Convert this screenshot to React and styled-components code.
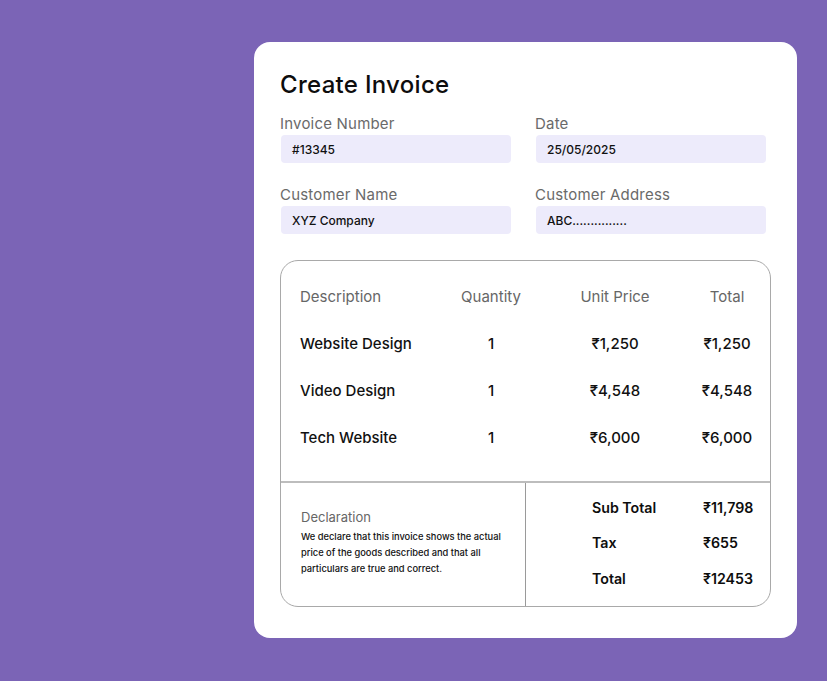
import React from "react";
import styled, { createGlobalStyle } from "styled-components";

const GlobalStyle = createGlobalStyle`
  html, body {
    margin: 0;
    padding: 0;
    background: #7b64b6;
  }
  body {
    font-family: Inter, "Noto Sans", "DejaVu Sans", sans-serif;
    color: #111;
  }
`;

const Page = styled.div`
  width: 827px;
  height: 681px;
  box-sizing: border-box;
  padding: 42px 0 0 254px;
  background: #7b64b6;
  overflow: hidden;
`;

const Card = styled.div`
  width: 543px;
  height: 596px;
  box-sizing: border-box;
  background: #fff;
  border-radius: 16px;
  padding: 27px 26px 31px 26px;
  display: flex;
  flex-direction: column;
`;

const Title = styled.h1`
  margin: 0;
  font-size: 24px;
  line-height: 32px;
  font-weight: 500;
  letter-spacing: 0.3px;
  color: #0d0d0d;
`;

const FormGrid = styled.div`
  display: grid;
  grid-template-columns: 231px 231px;
  column-gap: 24px;
  row-gap: 22px;
  margin-top: 13px;
`;

const Field = styled.div`
  display: flex;
  flex-direction: column;
  gap: 1px;
`;

const Label = styled.label`
  font-size: 15px;
  line-height: 20px;
  letter-spacing: 0.2px;
  color: #6a6a6a;
`;

const Input = styled.div`
  height: 28px;
  margin-left: 1px;
  box-sizing: border-box;
  background: #edebfb;
  border-radius: 4px;
  padding: 0 11px;
  display: flex;
  align-items: center;
  font-size: 12px;
  font-weight: 500;
  color: #111;
`;

const Table = styled.div`
  margin-top: 26px;
  border: 1px solid #a9a9a9;
  border-radius: 18px;
  flex: 1;
  display: flex;
  flex-direction: column;
  overflow: hidden;
`;

const Items = styled.div`
  padding: 12px 6px 20px 19px;
  display: grid;
  grid-template-columns: 141px 100px 148px 76px;
  grid-auto-rows: 47px;
  align-items: center;
`;

const Cell = styled.div`
  font-size: 15px;
  font-weight: ${p => (p.head ? 400 : 500)};
  color: ${p => (p.head ? "#666" : "#111")};
  text-align: ${p => (p.center ? "center" : "left")};
  white-space: nowrap;
`;

const Footer = styled.div`
  flex: 1;
  border-top: 2px solid #bdbdbd;
  display: grid;
  grid-template-columns: 245px 1fr;
`;

const Declaration = styled.div`
  border-right: 1px solid #9a9a9a;
  padding: 0 14px 4px 20px;
  display: flex;
  flex-direction: column;
  justify-content: center;
`;

const DeclTitle = styled.div`
  font-size: 13px;
  line-height: 16px;
  color: #666;
  margin-bottom: 4px;
`;

const DeclText = styled.p`
  margin: 0;
  max-width: 212px;
  font-size: 9.3px;
  line-height: 16px;
  font-weight: 500;
  color: #111;
`;

const Summary = styled.div`
  padding: 0 0 4px 66px;
  display: grid;
  grid-template-columns: 111px 1fr;
  grid-auto-rows: 35.5px;
  align-content: center;
  align-items: center;
`;

const SumCell = styled.div`
  font-size: 14.2px;
  font-weight: 600;
  color: #0d0d0d;
`;

const items = [
  { name: "Website Design", qty: 1, price: "₹1,250", total: "₹1,250" },
  { name: "Video Design", qty: 1, price: "₹4,548", total: "₹4,548" },
  { name: "Tech Website", qty: 1, price: "₹6,000", total: "₹6,000" },
];

const totals = [
  ["Sub Total", "₹11,798"],
  ["Tax", "₹655"],
  ["Total", "₹12453"],
];

const App = () => (
  <Page>
    <GlobalStyle />
    <Card>
      <Title>Create Invoice</Title>
      <FormGrid>
        <Field>
          <Label>Invoice Number</Label>
          <Input>#13345</Input>
        </Field>
        <Field>
          <Label>Date</Label>
          <Input>25/05/2025</Input>
        </Field>
        <Field>
          <Label>Customer Name</Label>
          <Input>XYZ Company</Input>
        </Field>
        <Field>
          <Label>Customer Address</Label>
          <Input>ABC...............</Input>
        </Field>
      </FormGrid>
      <Table>
        <Items>
          <Cell head>Description</Cell>
          <Cell head center>Quantity</Cell>
          <Cell head center>Unit Price</Cell>
          <Cell head center>Total</Cell>
          {items.map(it => (
            <React.Fragment key={it.name}>
              <Cell>{it.name}</Cell>
              <Cell center>{it.qty}</Cell>
              <Cell center>{it.price}</Cell>
              <Cell center>{it.total}</Cell>
            </React.Fragment>
          ))}
        </Items>
        <Footer>
          <Declaration>
            <DeclTitle>Declaration</DeclTitle>
            <DeclText>
              We declare that this invoice shows the actual price of the goods
              described and that all particulars are true and correct.
            </DeclText>
          </Declaration>
          <Summary>
            {totals.map(([k, v]) => (
              <React.Fragment key={k}>
                <SumCell>{k}</SumCell>
                <SumCell>{v}</SumCell>
              </React.Fragment>
            ))}
          </Summary>
        </Footer>
      </Table>
    </Card>
  </Page>
);

export default App;
